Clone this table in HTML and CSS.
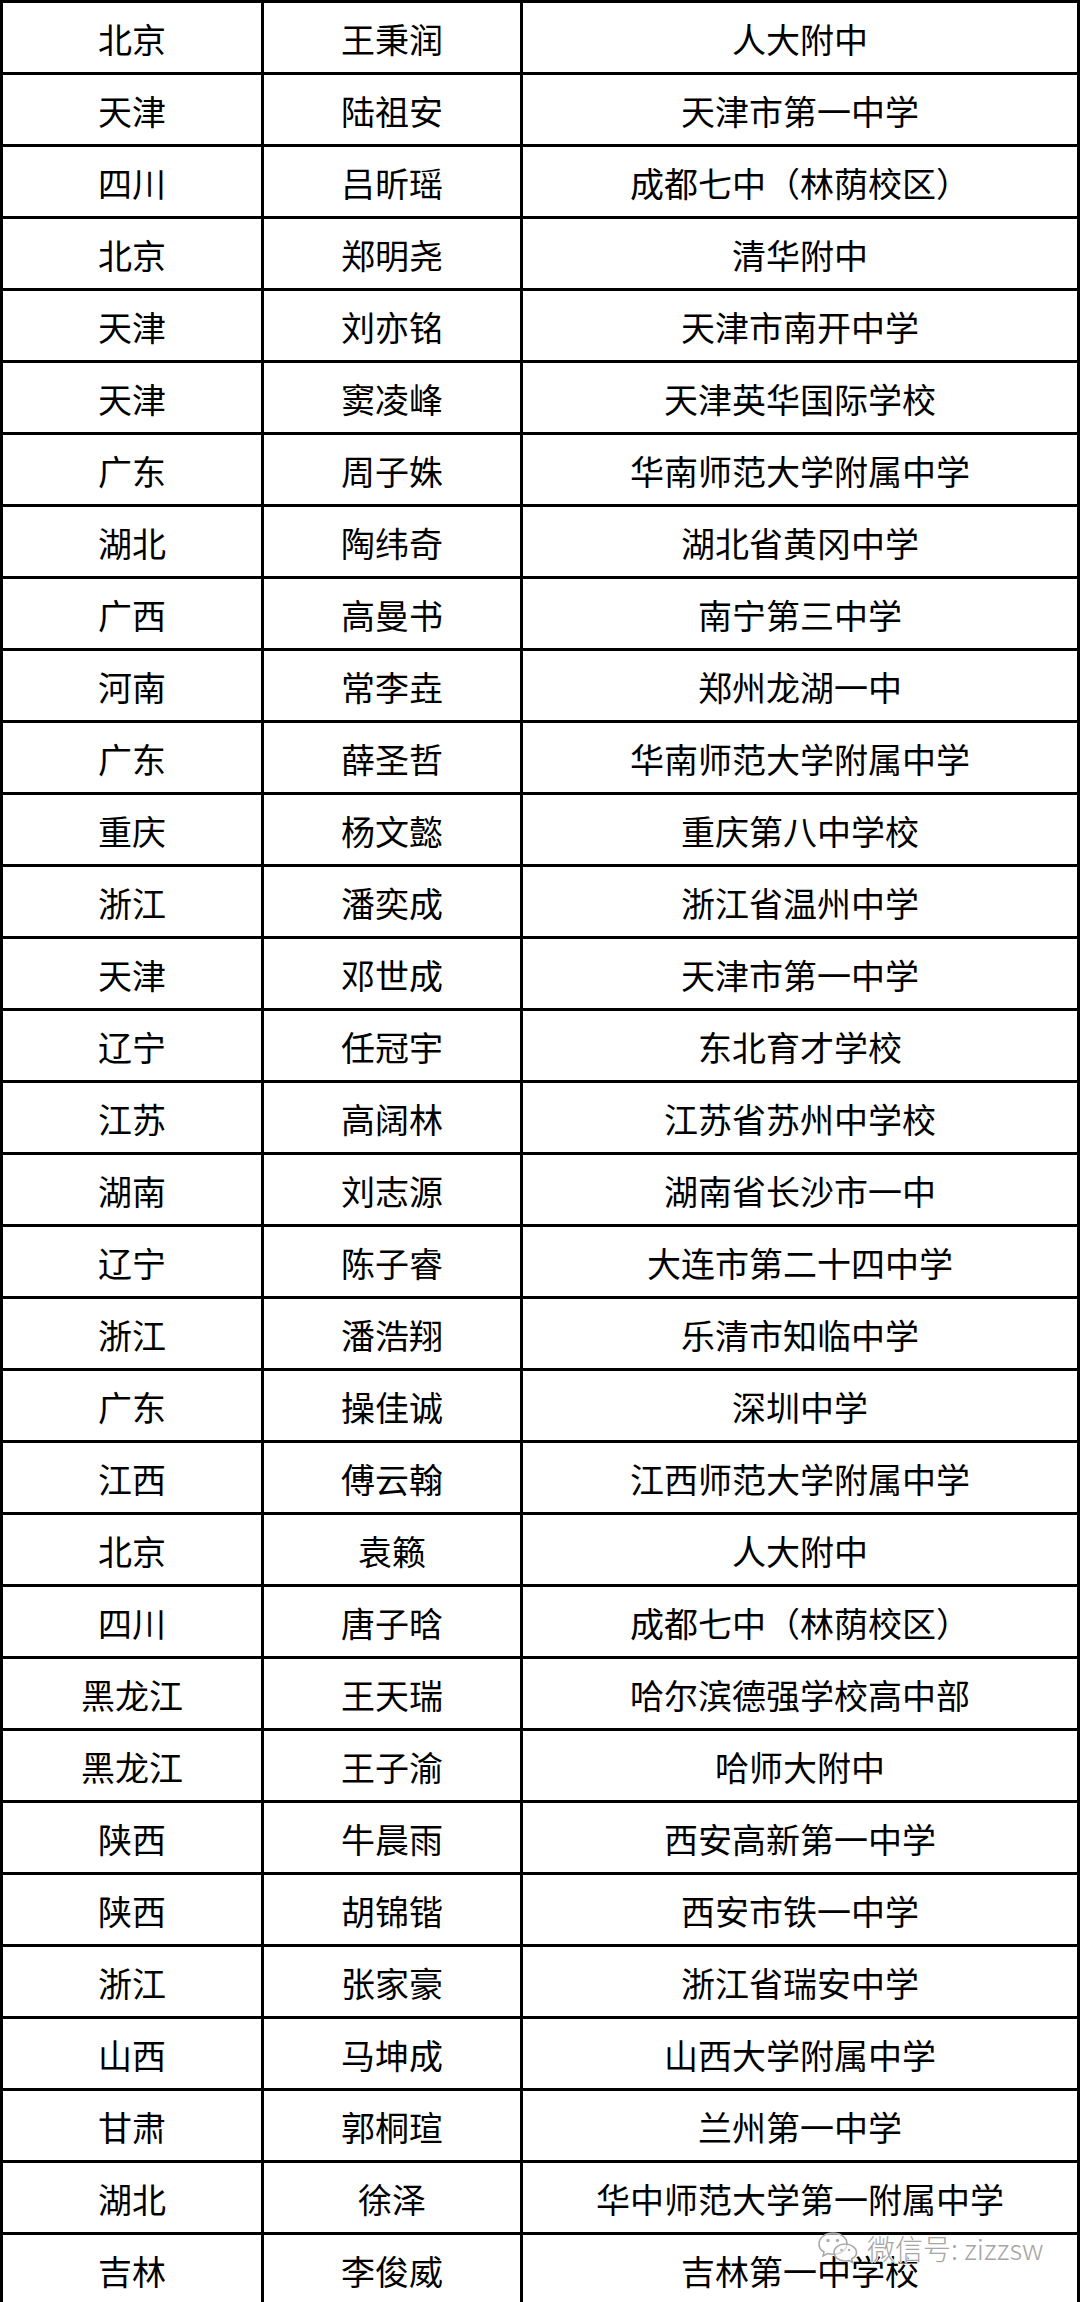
FILE: index.html
```html
<!DOCTYPE html>
<html lang="zh-CN">
<head>
<meta charset="utf-8">
<title>名单</title>
<link rel="stylesheet" href="styles.css">
</head>
<body>
<div class="page">
  <div class="table">
    <div class="cell">北京</div><div class="cell">王秉润</div><div class="cell">人大附中</div>
    <div class="cell">天津</div><div class="cell">陆祖安</div><div class="cell">天津市第一中学</div>
    <div class="cell">四川</div><div class="cell">吕昕瑶</div><div class="cell">成都七中（林荫校区）</div>
    <div class="cell">北京</div><div class="cell">郑明尧</div><div class="cell">清华附中</div>
    <div class="cell">天津</div><div class="cell">刘亦铭</div><div class="cell">天津市南开中学</div>
    <div class="cell">天津</div><div class="cell">窦凌峰</div><div class="cell">天津英华国际学校</div>
    <div class="cell">广东</div><div class="cell">周子姝</div><div class="cell">华南师范大学附属中学</div>
    <div class="cell">湖北</div><div class="cell">陶纬奇</div><div class="cell">湖北省黄冈中学</div>
    <div class="cell">广西</div><div class="cell">高曼书</div><div class="cell">南宁第三中学</div>
    <div class="cell">河南</div><div class="cell">常李垚</div><div class="cell">郑州龙湖一中</div>
    <div class="cell">广东</div><div class="cell">薛圣哲</div><div class="cell">华南师范大学附属中学</div>
    <div class="cell">重庆</div><div class="cell">杨文懿</div><div class="cell">重庆第八中学校</div>
    <div class="cell">浙江</div><div class="cell">潘奕成</div><div class="cell">浙江省温州中学</div>
    <div class="cell">天津</div><div class="cell">邓世成</div><div class="cell">天津市第一中学</div>
    <div class="cell">辽宁</div><div class="cell">任冠宇</div><div class="cell">东北育才学校</div>
    <div class="cell">江苏</div><div class="cell">高阔林</div><div class="cell">江苏省苏州中学校</div>
    <div class="cell">湖南</div><div class="cell">刘志源</div><div class="cell">湖南省长沙市一中</div>
    <div class="cell">辽宁</div><div class="cell">陈子睿</div><div class="cell">大连市第二十四中学</div>
    <div class="cell">浙江</div><div class="cell">潘浩翔</div><div class="cell">乐清市知临中学</div>
    <div class="cell">广东</div><div class="cell">操佳诚</div><div class="cell">深圳中学</div>
    <div class="cell">江西</div><div class="cell">傅云翰</div><div class="cell">江西师范大学附属中学</div>
    <div class="cell">北京</div><div class="cell">袁籁</div><div class="cell">人大附中</div>
    <div class="cell">四川</div><div class="cell">唐子晗</div><div class="cell">成都七中（林荫校区）</div>
    <div class="cell">黑龙江</div><div class="cell">王天瑞</div><div class="cell">哈尔滨德强学校高中部</div>
    <div class="cell">黑龙江</div><div class="cell">王子渝</div><div class="cell">哈师大附中</div>
    <div class="cell">陕西</div><div class="cell">牛晨雨</div><div class="cell">西安高新第一中学</div>
    <div class="cell">陕西</div><div class="cell">胡锦锴</div><div class="cell">西安市铁一中学</div>
    <div class="cell">浙江</div><div class="cell">张家豪</div><div class="cell">浙江省瑞安中学</div>
    <div class="cell">山西</div><div class="cell">马坤成</div><div class="cell">山西大学附属中学</div>
    <div class="cell">甘肃</div><div class="cell">郭桐瑄</div><div class="cell">兰州第一中学</div>
    <div class="cell">湖北</div><div class="cell">徐泽</div><div class="cell">华中师范大学第一附属中学</div>
    <div class="cell">吉林</div><div class="cell">李俊威</div><div class="cell">吉林第一中学校</div>
  </div>
  <div class="watermark">
    <svg class="wm-icon" width="42" height="34" viewBox="0 0 42 34">
      <g fill="rgba(255,255,255,0.55)" stroke="#a9a9a9" stroke-width="1.6">
        <path d="M16 2 C8 2 2 7 2 13 C2 16.5 4 19.3 7 21 L6 25 L10.5 22.6 C12.2 23.1 14 23.3 16 23.3 C24 23.3 30 18.6 30 12.7 C30 7 24 2 16 2 Z"/>
        <path d="M28 13 C21.5 13 17 17 17 21.5 C17 26 21.5 30 28 30 C29.4 30 30.6 29.8 31.8 29.4 L35.5 31.5 L34.6 28 C37.6 26.4 39.5 24.1 39.5 21.5 C39.5 17 34.5 13 28 13 Z"/>
      </g>
      <g fill="#b0b0b0">
        <circle cx="11" cy="9.5" r="1.7"/>
        <circle cx="20.5" cy="9.5" r="1.7"/>
        <circle cx="24.5" cy="19" r="1.3"/>
        <circle cx="32" cy="19" r="1.3"/>
      </g>
    </svg>
    <span class="wm-text">微信号: zizzsw</span>
  </div>
</div>
</body>
</html>
```
FILE: styles.css
```css
html, body {
  margin: 0;
  padding: 0;
  background: #ffffff;
  overflow: hidden;
}

.page {
  position: relative;
  width: 1080px;
  height: 2302px;
  overflow: hidden;
}

.table {
  display: grid;
  grid-template-columns: 261px 259px 557px;
  grid-auto-rows: 72px;
  border-left: 3px solid #000;
  border-top: 3px solid #000;
  font-family: "Noto Sans CJK SC", "Noto Sans", sans-serif;
  font-size: 34px;
  color: #000;
}

.cell {
  box-sizing: border-box;
  border-right: 3px solid #000;
  border-bottom: 3px solid #000;
  display: flex;
  align-items: center;
  justify-content: center;
  padding-top: 3px;
  white-space: nowrap;
  line-height: 1;
}

.watermark {
  position: absolute;
  left: 817px;
  top: 2231px;
  display: flex;
  align-items: center;
  gap: 8px;
}

.wm-icon {
  display: block;
}

.wm-text {
  font-family: "Noto Sans CJK SC", "Noto Sans", sans-serif;
  font-size: 28px;
  font-weight: 300;
  color: #a6a6a6;
  line-height: 1;
  white-space: nowrap;
  text-shadow: 1px 0 0 #fff, -1px 0 0 #fff, 0 1px 0 #fff, 0 -1px 0 #fff;
}
```
